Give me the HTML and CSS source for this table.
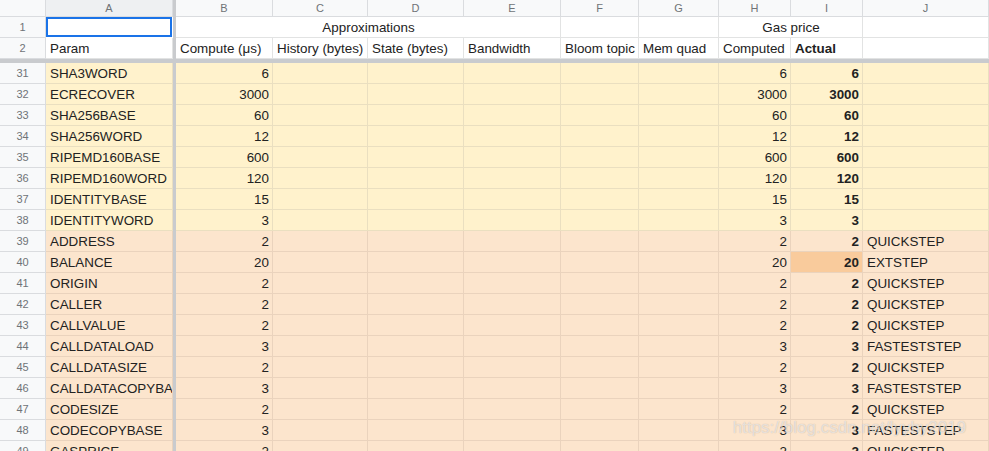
FILE: index.html
```html
<!DOCTYPE html>
<html>
<head>
<meta charset="utf-8">
<link rel="stylesheet" href="styles.css">
</head>
<body>
<div class="sheet">
  <div class="row hdr">
    <div class="c rh corner"></div>
    <div class="c ch sel">A</div>
    <div class="vdiv"></div>
    <div class="c ch">B</div>
    <div class="c ch">C</div>
    <div class="c ch">D</div>
    <div class="c ch">E</div>
    <div class="c ch">F</div>
    <div class="c ch">G</div>
    <div class="c ch">H</div>
    <div class="c ch">I</div>
    <div class="c ch">J</div>
  </div>
  <div class="row">
    <div class="c rh">1</div>
    <div class="c active"></div>
    <div class="vdiv"></div>
    <div class="c ctr span-be">Approximations</div>
    <div class="c"></div>
    <div class="c"></div>
    <div class="c ctr span-hi">Gas price</div>
    <div class="c"></div>
  </div>
  <div class="row">
    <div class="c rh">2</div>
    <div class="c">Param</div>
    <div class="vdiv"></div>
    <div class="c">Compute (μs)</div>
    <div class="c">History (bytes)</div>
    <div class="c">State (bytes)</div>
    <div class="c">Bandwidth</div>
    <div class="c">Bloom topic</div>
    <div class="c">Mem quad</div>
    <div class="c">Computed</div>
    <div class="c b">Actual</div>
    <div class="c"></div>
  </div>
  <div class="hdiv"></div>

  <div class="row y"><div class="c rh">31</div><div class="c">SHA3WORD</div><div class="vdiv"></div><div class="c r">6</div><div class="c"></div><div class="c"></div><div class="c"></div><div class="c"></div><div class="c"></div><div class="c r">6</div><div class="c r b">6</div><div class="c"></div></div>
  <div class="row y"><div class="c rh">32</div><div class="c">ECRECOVER</div><div class="vdiv"></div><div class="c r">3000</div><div class="c"></div><div class="c"></div><div class="c"></div><div class="c"></div><div class="c"></div><div class="c r">3000</div><div class="c r b">3000</div><div class="c"></div></div>
  <div class="row y"><div class="c rh">33</div><div class="c">SHA256BASE</div><div class="vdiv"></div><div class="c r">60</div><div class="c"></div><div class="c"></div><div class="c"></div><div class="c"></div><div class="c"></div><div class="c r">60</div><div class="c r b">60</div><div class="c"></div></div>
  <div class="row y"><div class="c rh">34</div><div class="c">SHA256WORD</div><div class="vdiv"></div><div class="c r">12</div><div class="c"></div><div class="c"></div><div class="c"></div><div class="c"></div><div class="c"></div><div class="c r">12</div><div class="c r b">12</div><div class="c"></div></div>
  <div class="row y"><div class="c rh">35</div><div class="c">RIPEMD160BASE</div><div class="vdiv"></div><div class="c r">600</div><div class="c"></div><div class="c"></div><div class="c"></div><div class="c"></div><div class="c"></div><div class="c r">600</div><div class="c r b">600</div><div class="c"></div></div>
  <div class="row y"><div class="c rh">36</div><div class="c">RIPEMD160WORD</div><div class="vdiv"></div><div class="c r">120</div><div class="c"></div><div class="c"></div><div class="c"></div><div class="c"></div><div class="c"></div><div class="c r">120</div><div class="c r b">120</div><div class="c"></div></div>
  <div class="row y"><div class="c rh">37</div><div class="c">IDENTITYBASE</div><div class="vdiv"></div><div class="c r">15</div><div class="c"></div><div class="c"></div><div class="c"></div><div class="c"></div><div class="c"></div><div class="c r">15</div><div class="c r b">15</div><div class="c"></div></div>
  <div class="row y"><div class="c rh">38</div><div class="c">IDENTITYWORD</div><div class="vdiv"></div><div class="c r">3</div><div class="c"></div><div class="c"></div><div class="c"></div><div class="c"></div><div class="c"></div><div class="c r">3</div><div class="c r b">3</div><div class="c"></div></div>

  <div class="row o"><div class="c rh">39</div><div class="c">ADDRESS</div><div class="vdiv"></div><div class="c r">2</div><div class="c"></div><div class="c"></div><div class="c"></div><div class="c"></div><div class="c"></div><div class="c r">2</div><div class="c r b">2</div><div class="c">QUICKSTEP</div></div>
  <div class="row o"><div class="c rh">40</div><div class="c">BALANCE</div><div class="vdiv"></div><div class="c r">20</div><div class="c"></div><div class="c"></div><div class="c"></div><div class="c"></div><div class="c"></div><div class="c r">20</div><div class="c r b hl">20</div><div class="c">EXTSTEP</div></div>
  <div class="row o"><div class="c rh">41</div><div class="c">ORIGIN</div><div class="vdiv"></div><div class="c r">2</div><div class="c"></div><div class="c"></div><div class="c"></div><div class="c"></div><div class="c"></div><div class="c r">2</div><div class="c r b">2</div><div class="c">QUICKSTEP</div></div>
  <div class="row o"><div class="c rh">42</div><div class="c">CALLER</div><div class="vdiv"></div><div class="c r">2</div><div class="c"></div><div class="c"></div><div class="c"></div><div class="c"></div><div class="c"></div><div class="c r">2</div><div class="c r b">2</div><div class="c">QUICKSTEP</div></div>
  <div class="row o"><div class="c rh">43</div><div class="c">CALLVALUE</div><div class="vdiv"></div><div class="c r">2</div><div class="c"></div><div class="c"></div><div class="c"></div><div class="c"></div><div class="c"></div><div class="c r">2</div><div class="c r b">2</div><div class="c">QUICKSTEP</div></div>
  <div class="row o"><div class="c rh">44</div><div class="c">CALLDATALOAD</div><div class="vdiv"></div><div class="c r">3</div><div class="c"></div><div class="c"></div><div class="c"></div><div class="c"></div><div class="c"></div><div class="c r">3</div><div class="c r b">3</div><div class="c">FASTESTSTEP</div></div>
  <div class="row o"><div class="c rh">45</div><div class="c">CALLDATASIZE</div><div class="vdiv"></div><div class="c r">2</div><div class="c"></div><div class="c"></div><div class="c"></div><div class="c"></div><div class="c"></div><div class="c r">2</div><div class="c r b">2</div><div class="c">QUICKSTEP</div></div>
  <div class="row o"><div class="c rh">46</div><div class="c">CALLDATACOPYBASE</div><div class="vdiv"></div><div class="c r">3</div><div class="c"></div><div class="c"></div><div class="c"></div><div class="c"></div><div class="c"></div><div class="c r">3</div><div class="c r b">3</div><div class="c">FASTESTSTEP</div></div>
  <div class="row o"><div class="c rh">47</div><div class="c">CODESIZE</div><div class="vdiv"></div><div class="c r">2</div><div class="c"></div><div class="c"></div><div class="c"></div><div class="c"></div><div class="c"></div><div class="c r">2</div><div class="c r b">2</div><div class="c">QUICKSTEP</div></div>
  <div class="row o"><div class="c rh">48</div><div class="c">CODECOPYBASE</div><div class="vdiv"></div><div class="c r">3</div><div class="c"></div><div class="c"></div><div class="c"></div><div class="c"></div><div class="c"></div><div class="c r">3</div><div class="c r b">3</div><div class="c">FASTESTSTEP</div></div>
  <div class="row o"><div class="c rh">49</div><div class="c">GASPRICE</div><div class="vdiv"></div><div class="c r">2</div><div class="c"></div><div class="c"></div><div class="c"></div><div class="c"></div><div class="c"></div><div class="c r">2</div><div class="c r b">2</div><div class="c">QUICKSTEP</div></div>

  <div class="watermark">https://blog.csdn.net/lyyby2019</div>
</div>
</body>
</html>
```

FILE: styles.css
```css
html, body {
  margin: 0;
  padding: 0;
  background: #ffffff;
  overflow: hidden;
}

.sheet {
  position: relative;
  width: 989px;
  height: 451px;
  overflow: hidden;
  font-family: "Liberation Sans", Arial, sans-serif;
  font-size: 13.4px;
  color: #222222;
}

.row {
  display: grid;
  grid-template-columns: 46px 127px 3px 97px 95px 96px 97px 78px 80px 72px 72px 1fr;
  height: 21px;
}

.row.hdr {
  height: 17px;
}

.c {
  box-sizing: border-box;
  border-right: 1px solid #e2e3e3;
  border-bottom: 1px solid #e2e3e3;
  padding: 2px 3px 0 4px;
  line-height: 18px;
  white-space: nowrap;
  overflow: hidden;
}

.row.y .c { background: #fff2cc; border-color: #eadfc0; }
.row.o .c { background: #fce5cd; border-color: #ead3bd; }
.row.y .c.rh, .row.o .c.rh { background: #f8f9fa; border-color: #dadcdf; }

.c.r { text-align: right; }
.c.ctr { text-align: center; }
.c.b { font-weight: bold; }
.row.o .c.hl { background: #f9cb9c; }

.span-be { grid-column: 4 / span 4; }
.span-hi { grid-column: 10 / span 2; }

.rh {
  background: #f8f9fa;
  border-color: #dadcdf;
  color: #6f7377;
  font-size: 11px;
  text-align: center;
  padding: 1px 0 0 0;
}

.ch {
  background: #f8f9fa;
  border-color: #dadcdf;
  color: #6f7377;
  font-size: 11px;
  line-height: 16px;
  text-align: center;
  padding: 0;
}

.ch.sel { background: #eef0f2; }

.corner { background: #f8f9fa; }

.active {
  box-shadow: inset 0 0 0 2px #1a73e8;
  border-color: transparent;
}

.vdiv {
  background: #c9cbce;
}

.hdiv {
  height: 4px;
  background: #c9cbce;
}

.watermark {
  position: absolute;
  left: 733px;
  top: 418px;
  font-size: 17px;
  color: rgba(255, 255, 255, 0.6);
  text-shadow: 0 0 1px rgba(0, 0, 0, 0.25);
  white-space: nowrap;
}
```
